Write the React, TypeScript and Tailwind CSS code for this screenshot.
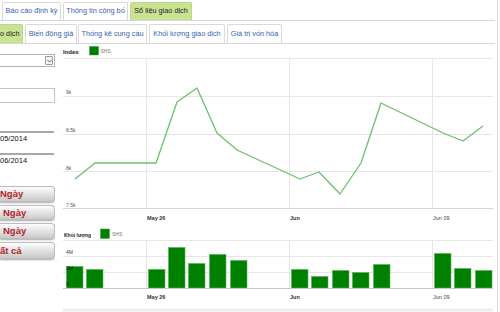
import React from "react";

const linePts: [number, number][] = [
  [75, 179], [95, 163], [156, 163], [177, 102], [197, 88], [217, 133], [237, 150],
  [300, 179], [319, 172], [340, 194], [361, 163], [381, 103], [443, 133], [463, 141], [483, 126],
];

const bars: [number, number][] = [
  [66, 266], [86, 269], [148, 269], [168, 247], [188, 263], [209, 254], [230, 260],
  [291, 269], [311, 276], [332, 270], [352, 272], [373, 264], [434, 253], [454, 268], [475, 270],
];

const FONT = "'Liberation Sans', Arial, sans-serif";

function IndexChart() {
  const hLines = [58.5, 96.5, 134.5, 171.5];
  const vLines = [146.5, 289.5, 432.5];
  return (
    <svg width={442} height={180} viewBox="55 44 442 180" className="block" fontFamily={FONT}>
      <text x={63} y={54} fontSize={6} fontWeight="bold" fill="#222">Index</text>
      <rect x={89.5} y={46.5} width={9} height={8.5} fill="#008000" stroke="#3f9f3f" strokeWidth={0.5} />
      <text x={100.5} y={53} fontSize={5} fill="#777">SHS</text>
      {hLines.map((y) => (
        <line key={y} x1={63} x2={493} y1={y} y2={y} stroke="#e6e6e6" strokeWidth={1} />
      ))}
      {vLines.map((x) => (
        <line key={x} x1={x} x2={x} y1={58} y2={209} stroke="#e6e6e6" strokeWidth={1} />
      ))}
      <line x1={63} x2={493} y1={208.5} y2={208.5} stroke="#d6d6d6" strokeWidth={1} />
      <text x={66} y={94} fontSize={5} fill="#555">9k</text>
      <text x={66} y={131.5} fontSize={5} fill="#555">8.5k</text>
      <text x={66} y={169.5} fontSize={5} fill="#555">8k</text>
      <text x={66} y={206.5} fontSize={5} fill="#555">7.5k</text>
      <polyline
        points={linePts.map((p) => p.join(",")).join(" ")}
        fill="none"
        stroke="#6cc06c"
        strokeWidth={1.3}
        strokeLinejoin="round"
      />
      <text x={147} y={220} fontSize={5.5} fontWeight="bold" fill="#333">May 26</text>
      <text x={290} y={220} fontSize={5.5} fontWeight="bold" fill="#333">Jun</text>
      <text x={433} y={220} fontSize={5.5} fill="#444">Jun 09</text>
    </svg>
  );
}

function VolumeChart() {
  const hLines = [240.5, 256.5, 272.5];
  const vLines = [146.5, 289.5, 432.5];
  return (
    <svg width={442} height={88} viewBox="55 224 442 88" className="block" fontFamily={FONT}>
      <text x={64} y={236.5} fontSize={5} fontWeight="bold" fill="#222">Khối lượng</text>
      <rect x={100.5} y={229} width={9} height={9.5} fill="#008000" stroke="#3f9f3f" strokeWidth={0.5} />
      <text x={112} y={236} fontSize={5} fill="#777">SHS</text>
      {hLines.map((y) => (
        <line key={y} x1={63} x2={493} y1={y} y2={y} stroke="#e6e6e6" strokeWidth={1} />
      ))}
      {vLines.map((x) => (
        <line key={x} x1={x} x2={x} y1={240} y2={288} stroke="#e6e6e6" strokeWidth={1} />
      ))}
      {bars.map(([x, y]) => (
        <rect key={x} x={x + 0.5} y={y + 0.5} width={16.5} height={288 - y - 0.5} fill="#008000" stroke="#52b552" strokeWidth={0.6} />
      ))}
      <line x1={63} x2={493} y1={288.5} y2={288.5} stroke="#c8c8c8" strokeWidth={1} />
      <text x={66} y={254} fontSize={5} fill="#444">4M</text>
      <text x={66} y={270} fontSize={5} fill="#222">2M</text>
      <text x={66} y={286} fontSize={5} fill="#222">0</text>
      <text x={147} y={298.5} fontSize={5.5} fontWeight="bold" fill="#333">May 26</text>
      <text x={290} y={298.5} fontSize={5.5} fontWeight="bold" fill="#333">Jun</text>
      <text x={433} y={298.5} fontSize={5.5} fill="#444">Jun 09</text>
      <rect x={63} y={308.5} width={430} height={3} fill="#ececec" />
    </svg>
  );
}

function Btn({ label, h, mt, pl }: { label: string; h: string; mt: string; pl: string }) {
  return (
    <div
      className={`${h} ${mt} ${pl} w-[55px] flex items-center rounded-r-[4px] border border-l-0 border-[#bcbcbc] bg-gradient-to-b from-[#fdfdfd] to-[#c9c9c9] shadow-[0_1px_2px_rgba(0,0,0,0.35)] text-[9.5px] font-bold text-[#b3232b] leading-none whitespace-nowrap`}
    >
      {label}
    </div>
  );
}

export default function App() {
  return (
    <div className="w-[500px] h-[312px] overflow-hidden bg-white flex font-['Liberation_Sans',Arial,sans-serif]">
      <div className="w-[498px] h-full border-r border-[#dedede] flex flex-col">
        {/* Top tabs */}
        <div className="h-[21px] mr-[2px] flex items-end gap-[2px] pl-[2px] border-b border-[#d6d6d6] shrink-0">
          <div className="w-[59px] h-[18px] flex items-center justify-center border border-b-0 border-[#d9d9d9] rounded-t-[2px] text-[7.3px] text-[#3464b0]">
            Báo cáo định kỳ
          </div>
          <div className="w-[65px] h-[18px] flex items-center justify-center border border-b-0 border-[#d9d9d9] rounded-t-[2px] text-[7.3px] text-[#3464b0]">
            Thông tin công bố
          </div>
          <div className="w-[62px] h-[18px] flex items-center justify-center border border-b-0 border-[#bcd58a] bg-[#c9e392] rounded-t-[2px] text-[7.3px] text-[#1d1d1d]">
            Sổ liệu giao dịch
          </div>
        </div>
        {/* Second tabs */}
        <div className="mt-[3px] h-[20px] mr-[2px] flex items-end border-b border-[#d6d6d6] shrink-0">
          <div className="w-[23px] h-[19px] flex items-center border border-l-0 border-b-0 border-[#bcd58a] bg-[#c9e392] rounded-tr-[2px] text-[7.3px] text-[#1d1d1d] whitespace-nowrap">
            o dịch
          </div>
          <div className="ml-[2px] w-[52px] h-[19px] flex items-center justify-center border border-b-0 border-[#d9d9d9] rounded-t-[2px] text-[7.3px] text-[#3464b0] whitespace-nowrap">
            Biến động giá
          </div>
          <div className="ml-[1px] w-[69px] h-[19px] flex items-center justify-center border border-b-0 border-[#d9d9d9] rounded-t-[2px] text-[7.3px] text-[#3464b0] whitespace-nowrap">
            Thống kê cung cầu
          </div>
          <div className="ml-[2px] w-[76px] h-[19px] flex items-center justify-center border border-b-0 border-[#d9d9d9] rounded-t-[2px] text-[7.3px] text-[#3464b0] whitespace-nowrap">
            Khối lượng giao dịch
          </div>
          <div className="ml-[2px] w-[55px] h-[19px] flex items-center justify-center border border-b-0 border-[#d9d9d9] rounded-t-[2px] text-[7.3px] text-[#3464b0] whitespace-nowrap">
            Giá trị vốn hóa
          </div>
        </div>
        {/* Body */}
        <div className="flex flex-1 min-h-0">
          <div className="w-[55px] shrink-0 flex flex-col overflow-hidden">
            <div className="mt-[10px] h-[13px] w-[55px] border border-l-0 border-[#b4b4b4] flex items-center justify-end pr-[1px]">
              <div className="w-[8px] h-[9px] border border-[#9a9a9a] rounded-[1px] bg-[#f4f4f4] flex items-center justify-center">
                <svg width="5" height="4" viewBox="0 0 5 4">
                  <path d="M0.5 1 L2.5 3 L4.5 1" fill="none" stroke="#444" strokeWidth="0.8" />
                </svg>
              </div>
            </div>
            <div className="mt-[21px] h-[15px] w-[55px] border border-l-0 border-[#c4c4c4]" />
            <div className="mt-[28px] h-[17px] w-[54px] border-t-2 border-[#a8a8a8] text-[7.5px] text-[#111] leading-[11px] whitespace-nowrap">
              05/2014
            </div>
            <div className="mt-[5px] h-[17px] w-[54px] border-t-2 border-[#a8a8a8] text-[7.5px] text-[#111] leading-[11px] whitespace-nowrap">
              06/2014
            </div>
            <Btn label="Ngày" h="h-[16px]" mt="mt-[16px]" pl="pl-0" />
            <Btn label="Ngày" h="h-[15px]" mt="mt-[3px]" pl="pl-[3px]" />
            <Btn label="Ngày" h="h-[16px]" mt="mt-[3px]" pl="pl-[3px]" />
            <Btn label="ất cả" h="h-[17px]" mt="mt-[3px]" pl="pl-0" />
          </div>
          <div className="w-[442px] flex flex-col">
            <IndexChart />
            <VolumeChart />
          </div>
        </div>
      </div>
    </div>
  );
}
